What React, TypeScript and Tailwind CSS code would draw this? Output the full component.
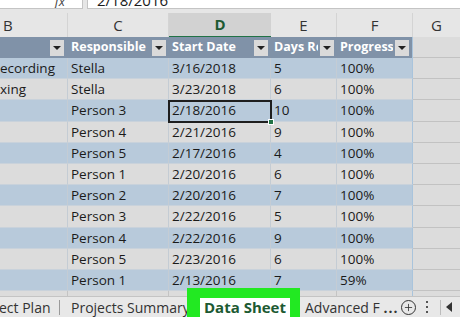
import { Plus } from "lucide-react";

type Row = [string, string, string, string, string];

const rows: Row[] = [
  ["ecording", "Stella", "3/16/2018", "5", "100%"],
  ["xing", "Stella", "3/23/2018", "6", "100%"],
  ["", "Person 3", "2/18/2016", "10", "100%"],
  ["", "Person 4", "2/21/2016", "9", "100%"],
  ["", "Person 5", "2/17/2016", "4", "100%"],
  ["", "Person 1", "2/20/2016", "6", "100%"],
  ["", "Person 2", "2/20/2016", "7", "100%"],
  ["", "Person 3", "2/22/2016", "5", "100%"],
  ["", "Person 4", "2/22/2016", "9", "100%"],
  ["", "Person 5", "2/23/2016", "6", "100%"],
  ["", "Person 1", "2/13/2016", "7", "59%"],
];

const cols = "grid grid-cols-[68px_101px_102px_66px_76px_47px]";

const FilterButton = () => (
  <div className="w-[14px] h-[16px] bg-[#dadada] flex items-center justify-center shrink-0">
    <div className="w-0 h-0 border-l-[4px] border-r-[4px] border-t-[4px] border-l-transparent border-r-transparent border-t-[#222]" />
  </div>
);

const HeaderCell = ({ label }: { label: string }) => (
  <div className="flex items-center h-full pl-[3px] pr-[3px] gap-[2px] overflow-hidden">
    <span className="flex-1 min-w-0 font-bold text-white whitespace-nowrap overflow-hidden">{label}</span>
    <FilterButton />
  </div>
);

export default function App() {
  return (
    <div
      className="relative w-[460px] h-[317px] overflow-hidden bg-[#e6e6e6] text-[13.5px] text-[#1a1a1a]"
      style={{ fontFamily: '"Open Sans", "Noto Sans", sans-serif' }}
    >
      {/* formula bar */}
      <div className="flex h-[13px] gap-[4px]">
        <div className="w-[83px] h-[9px] bg-white border-b border-r border-[#c4c4c4] overflow-hidden flex justify-end pr-[17px]">
          <span className="italic text-[13px] leading-[13px] -mt-[5px] text-[#444]">fx</span>
        </div>
        <div className="flex-1 h-[9px] bg-white border-b border-l border-[#c4c4c4] overflow-hidden pl-[9px]">
          <span className="text-[15px] leading-[15px] block -mt-[7px]">2/18/2016</span>
        </div>
      </div>

      {/* column letters */}
      <div className={`${cols} h-[24px] text-[15px] text-[#333]`}>
        <div className="flex items-center pl-[3px] border-r border-[#d4d4d4]">B</div>
        <div className="flex items-center justify-center border-r border-[#d4d4d4]">C</div>
        <div className="flex items-center justify-center bg-[#d2d2d2] border-b-2 border-[#217346] font-bold text-[#1d5a32]">D</div>
        <div className="flex items-center justify-center border-r border-[#d4d4d4]">E</div>
        <div className="flex items-center justify-center border-r border-[#d4d4d4]">F</div>
        <div className="flex items-center justify-center">G</div>
      </div>

      {/* table header */}
      <div className={`${cols} h-[21px] text-[12.5px]`}>
        <div className="bg-[#8092a8] flex items-center justify-end pr-[4px]">
          <FilterButton />
        </div>
        <div className="bg-[#8092a8]">
          <HeaderCell label="Responsible" />
        </div>
        <div className="bg-[#8092a8]">
          <HeaderCell label="Start Date" />
        </div>
        <div className="bg-[#8092a8]">
          <HeaderCell label="Days Remaining" />
        </div>
        <div className="bg-[#8092a8] border-r border-[#a9c4dc]">
          <HeaderCell label="Progress" />
        </div>
        <div className="bg-[#dcdcdc] border-b border-[#c2c2c2]" />
      </div>

      {/* data rows */}
      {rows.map((r, i) => {
        const bg = i % 2 === 0 ? "bg-[#b8cadb]" : "bg-[#dcdcdc]";
        return (
          <div key={i} className={`${cols} h-[21.2px] leading-[21px]`}>
            {r.map((v, j) => (
              <div
                key={j}
                className={`${bg} ${j === 0 ? "pl-0" : "pl-[3px]"} whitespace-nowrap overflow-hidden border-b border-[#c9d2db] border-r ${
                  j < 4 ? "border-r-[#c4ccd4]" : "border-r-[#a9c4dc]"
                }`}
              >
                {v}
              </div>
            ))}
            <div className="bg-[#dcdcdc] border-b border-[#c2c2c2]" />
          </div>
        );
      })}

      {/* partial row */}
      <div className={`${cols} h-[5px]`}>
        <div className="bg-[#dcdcdc] border-r border-[#c4c4c4]" />
        <div className="bg-[#dcdcdc] border-r border-[#c4c4c4]" />
        <div className="bg-[#dcdcdc] border-r border-[#c4c4c4]" />
        <div className="bg-[#dcdcdc] border-r border-[#c4c4c4]" />
        <div className="bg-[#dcdcdc] border-r border-[#a9c4dc]" />
        <div className="bg-[#dcdcdc]" />
      </div>

      {/* sheet tabs */}
      <div className="flex items-center h-[21px] border-t border-[#c4c4c4] bg-[#e8e8e8] text-[14px] text-[#333] whitespace-nowrap">
        <div className="w-[60px] shrink-0 -ml-[1px]">ect Plan</div>
        <div className="w-px h-[15px] bg-[#9a9a9a]" />
        <div className="w-[127px] shrink-0 pl-[11px] overflow-hidden">Projects Summary</div>
        <div className="w-[113px] shrink-0" />
        <div className="w-[100px] shrink-0 pl-[5px] overflow-hidden">
          Advanced F&nbsp;<span className="font-bold tracking-[1px]">...</span>
        </div>
        <div className="w-[16px] flex justify-center">
          <div className="w-[15px] h-[15px] rounded-full border border-[#333] flex items-center justify-center">
            <Plus size={11} strokeWidth={1.8} color="#333" />
          </div>
        </div>
        <div className="w-[22px] flex flex-col items-center gap-[3px]">
          <div className="w-[2px] h-[2px] bg-[#555]" />
          <div className="w-[2px] h-[2px] bg-[#555]" />
          <div className="w-[2px] h-[2px] bg-[#555]" />
        </div>
        <div className="w-px h-[15px] bg-[#bcbcbc] ml-[2px]" />
        <div className="pl-[5px]">
          <div className="w-0 h-0 border-t-[5px] border-b-[5px] border-r-[6px] border-t-transparent border-b-transparent border-r-[#333]" />
        </div>
      </div>

      {/* selected cell */}
      <div className="absolute left-[168px] top-[100.4px] w-[104px] h-[22.2px] border-2 border-[#1e1e1e]" />
      <div className="absolute left-[268px] top-[119px] w-[6px] h-[6px] bg-[#217346] border border-white" />

      {/* highlight on active tab */}
      <div className="absolute left-[187px] top-[288px] w-[113px] h-[29px] bg-[#22e922] pt-[10px] pl-[13px] pr-[10px]">
        <div className="h-full bg-white flex items-center justify-center font-bold text-[15px] text-[#1d5a32]">Data Sheet</div>
      </div>
    </div>
  );
}
